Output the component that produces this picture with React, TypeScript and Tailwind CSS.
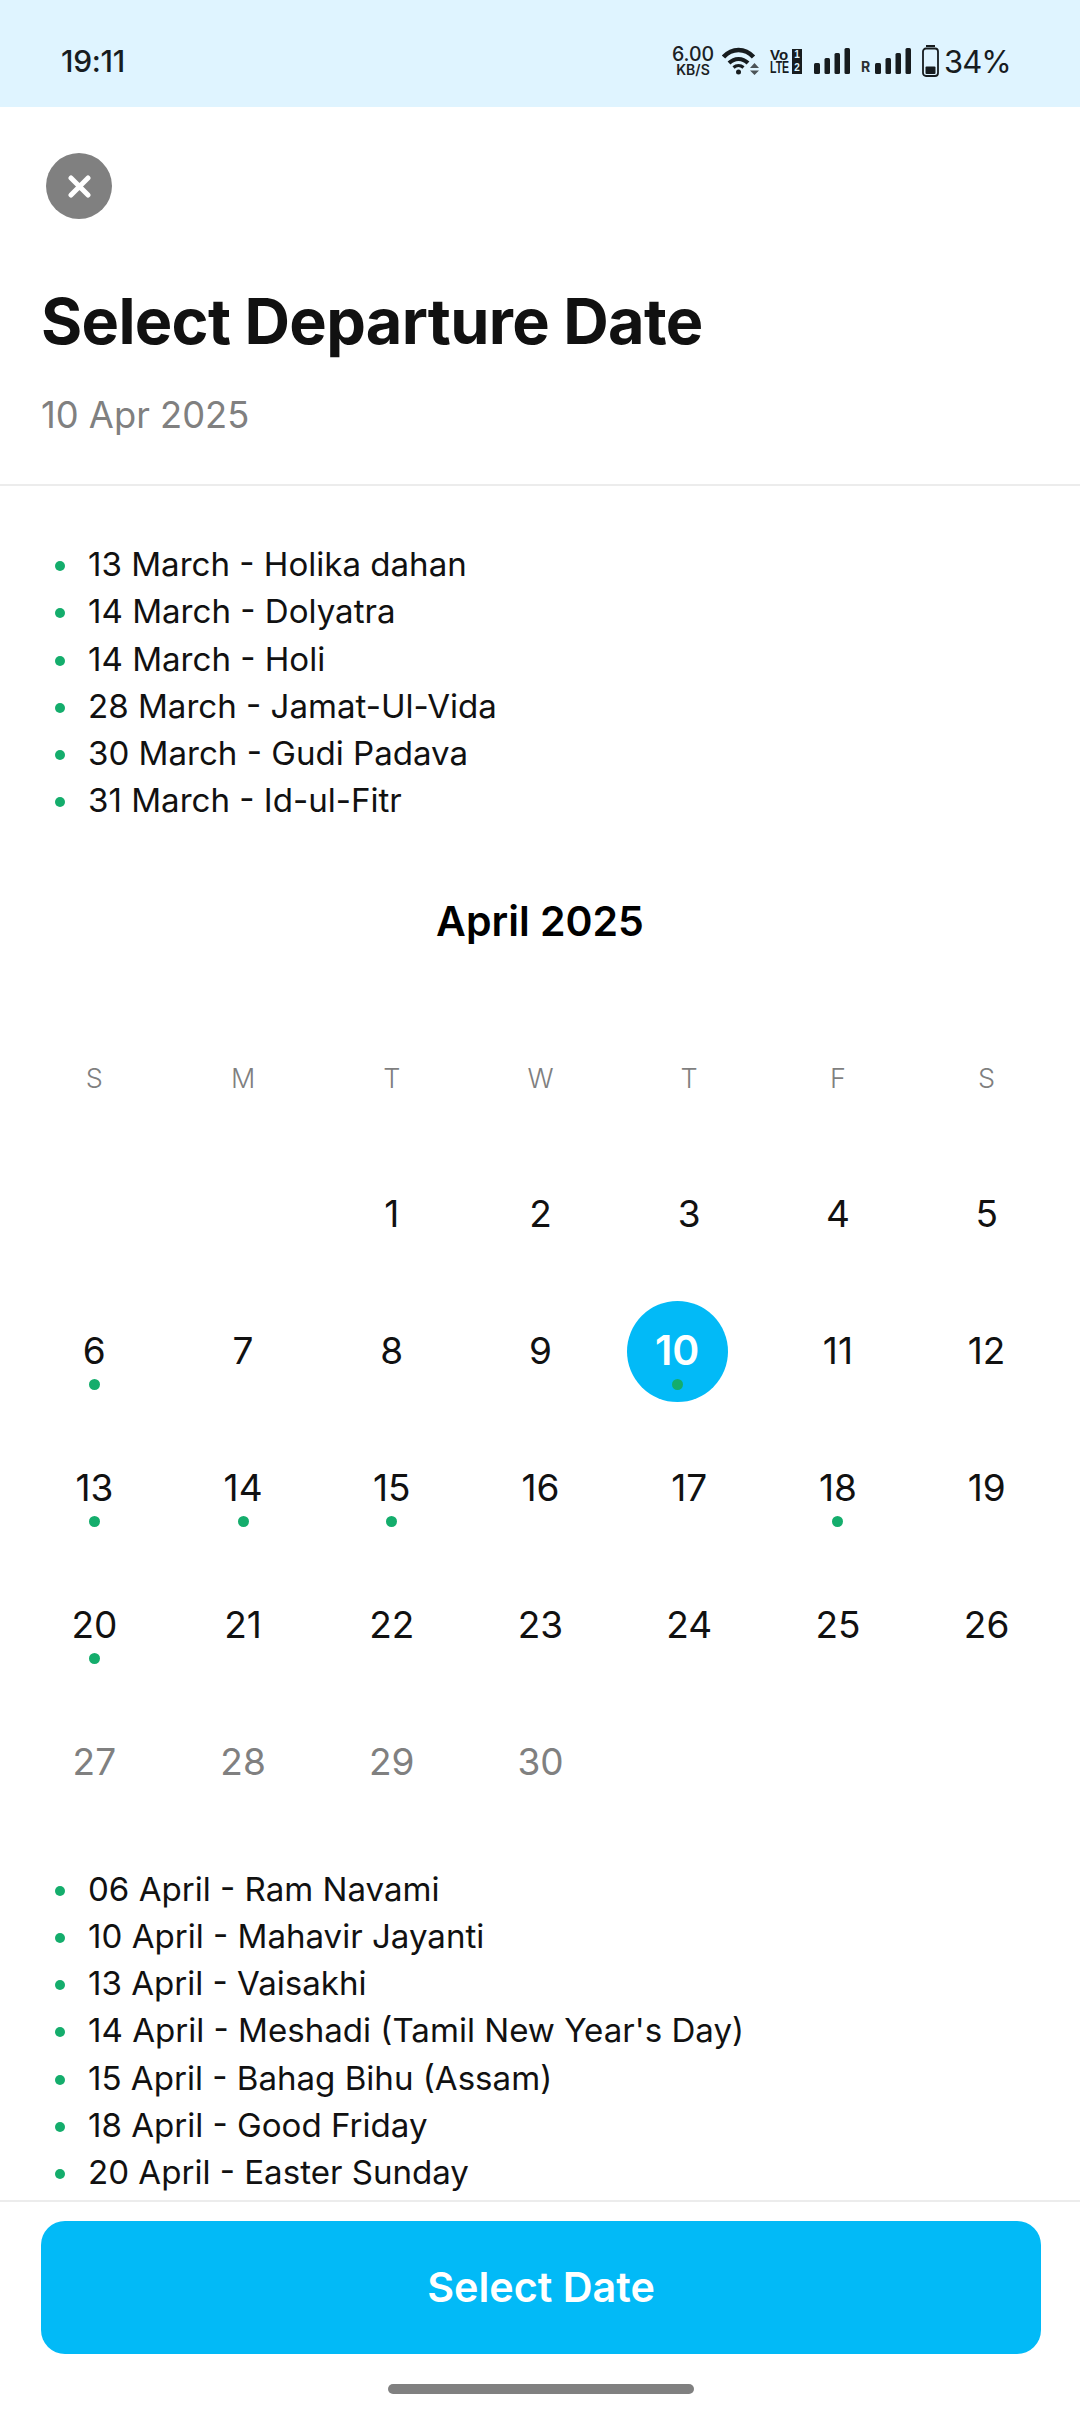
const early = ["13 March - Holika dahan","14 March - Dolyatra","14 March - Holi","28 March - Jamat-Ul-Vida","30 March - Gudi Padava","31 March - Id-ul-Fitr"];
const late = ["06 April - Ram Navami","10 April - Mahavir Jayanti","13 April - Vaisakhi","14 April - Meshadi (Tamil New Year's Day)","15 April - Bahag Bihu (Assam)","18 April - Good Friday","20 April - Easter Sunday"];
const days = ["S","M","T","W","T","F","S"];
const dotted = [6,10,13,14,15,18,20];
const cells: (number|null)[] = [null,null,...Array.from({length:30},(_,i)=>i+1)];

function Holidays({items}:{items:string[]}) {
  return (
    <ul className="flex flex-col pl-[55px]">
      {items.map(t=>(
        <li key={t} className="flex h-[47.25px] items-center text-[33.1px] leading-none font-[380] text-[#111111]">
          <span className="mt-[3px] mr-[23px] h-[10px] w-[10px] shrink-0 rounded-full bg-[#14ad6c]"></span>
          <span className="whitespace-nowrap">{t}</span>
        </li>
      ))}
    </ul>
  );
}

function Bars() {
  return (
    <svg width="36" height="26" viewBox="0 0 36 26" fill="#171c1f">
      <rect x="0" y="15" width="6" height="11" rx="1.5"/><rect x="10.5" y="10" width="5.5" height="16" rx="1.5"/><rect x="20.5" y="5" width="5.5" height="21" rx="1.5"/><rect x="30.5" y="0" width="5.5" height="26" rx="1.5"/>
    </svg>
  );
}

function StatusIcons() {
  return (
    <div className="flex items-center">
      <div className="mr-[8px] flex w-[42px] flex-col items-center text-[#1b2124]">
        <span className="text-[19.5px] leading-[17px] font-medium">6.00</span>
        <span className="text-[14px] leading-[13px] font-semibold">KB/S</span>
      </div>
      <svg width="37" height="28" viewBox="0 0 37 28" className="mr-[11px]" fill="none" stroke="#171c1f">
        <path d="M1.5 10C10 0.5 23 0.5 31.5 10" strokeWidth="4.5" />
        <path d="M7 16C12.5 10.5 20.5 10.5 26 16" strokeWidth="4" />
        <path d="M11.5 20.5C14.5 18 18.5 18 21.5 20.5" strokeWidth="3.2" />
        <circle cx="16.5" cy="25" r="2.5" fill="#171c1f" stroke="none" />
        <path d="M28 21L32.5 16L37 21ZM28 23.5H37L32.5 28Z" fill="#4c5357" stroke="none" />
      </svg>
      <div className="mr-[12px] grid h-[25px] w-[32px] grid-cols-[20px_10px] grid-rows-2 gap-x-[2px] font-['Liberation_Sans',sans-serif] font-bold text-[#171c1f]">
        <span className="text-[15px] leading-[12px] whitespace-nowrap">Vo</span>
        <span className="bg-[#171c1f] text-center text-[10px] leading-[12px] text-[#dff4ff]">1</span>
        <span className="origin-left scale-x-[0.66] text-[16px] leading-[13px] whitespace-nowrap">LTE</span>
        <span className="bg-[#171c1f] text-center text-[10px] leading-[13px] text-[#dff4ff]">2</span>
      </div>
      <div className="mr-[11px]"><Bars /></div>
      <span className="mt-[12px] mr-[5px] w-[9px] text-[14px] leading-none font-bold text-[#2a3033]">R</span>
      <div className="mr-[11px]"><Bars /></div>
      <svg width="17" height="32" viewBox="0 0 17 32" className="mr-[5px]" fill="none">
        <rect x="4" y="0" width="9" height="2" fill="#171c1f"/>
        <rect x="1" y="3.5" width="15" height="27.5" rx="3" stroke="#171c1f" strokeWidth="1.8"/>
        <rect x="3.5" y="21.5" width="10" height="7.5" rx="1" fill="#171c1f"/>
      </svg>
      <span className="w-[64px] text-[31px] leading-none font-normal tracking-[-1px] whitespace-nowrap text-[#171c1f]">34%</span>
    </div>
  );
}

export default function App() {
  return (
    <div className="flex h-[2412px] w-[1080px] flex-col overflow-hidden bg-white font-['Inter',sans-serif]">
      <header className="flex h-[107px] shrink-0 items-center justify-between bg-[#dff4ff] pt-[15px] pr-[72px] pl-[61px]">
        <span className="text-[30px] font-medium tracking-[-0.3px] text-[#171c1f]">19:11</span>
        <StatusIcons />
      </header>
      <section className="h-[379px] shrink-0 border-b-2 border-[#ececec] pt-[46px]">
        <div className="ml-[46px] flex h-[66px] w-[66px] items-center justify-center rounded-full bg-[#808080]">
          <svg width="23" height="23" viewBox="0 0 23 23" stroke="white" strokeWidth="5" strokeLinecap="round"><path d="M3 3L20 20M20 3L3 20"/></svg>
        </div>
        <h1 className="mt-[62px] ml-[41px] text-[63px] leading-[80px] font-bold tracking-[-0.7px] text-[#111111]">Select Departure Date</h1>
        <p className="mt-[32px] ml-[41px] text-[36.3px] leading-[44px] text-[#808080]">10 Apr 2025</p>
      </section>
      <main className="min-h-0 flex-1 overflow-hidden pt-[55px]">
        <Holidays items={early} />
        <h2 className="mt-[71px] text-center text-[41px] leading-[50px] font-semibold text-black">April 2025</h2>
        <div className="mt-[116px] grid grid-cols-7 pr-[19px] pl-[20px]">
          {days.map((d,i)=>(
            <div key={i} className="flex h-[36px] items-center justify-center text-[27px] font-light text-[#7f7f7f]">{d}</div>
          ))}
        </div>
        <div className="mt-[48px] grid grid-cols-7 pr-[19px] pl-[20px]">
          {cells.map((c,i)=>(
            <div key={i} className="flex h-[137px] items-center justify-center">
              {c!==null && (
                <div className={c===10 ? "relative flex h-[101px] w-[101px] -translate-x-[12px] items-center justify-center rounded-full bg-[#02baf7] text-[41px] font-semibold text-white" : c>=27 ? "relative flex h-[101px] w-[101px] items-center justify-center text-[37px] font-[380] text-[#808080]" : "relative flex h-[101px] w-[101px] items-center justify-center text-[37px] font-[380] text-[#111111]"}>
                  {c}
                  {dotted.includes(c) && <span className="absolute top-[78px] left-[45px] h-[11px] w-[11px] rounded-full bg-[#14ad6c]"></span>}
                </div>
              )}
            </div>
          ))}
        </div>
        <div className="mt-[35px]"><Holidays items={late} /></div>
      </main>
      <footer className="relative h-[212px] shrink-0 border-t-2 border-[#ececec] pt-[19px] pr-[39px] pl-[41px]">
        <button className="flex h-[133px] w-full items-center justify-center rounded-[24px] bg-[#02baf7] text-[41.3px] font-semibold text-white">Select Date</button>
        <div className="mx-auto mt-[30px] h-[10px] w-[306px] rounded-full bg-[#808080]"></div>
      </footer>
    </div>
  );
}
